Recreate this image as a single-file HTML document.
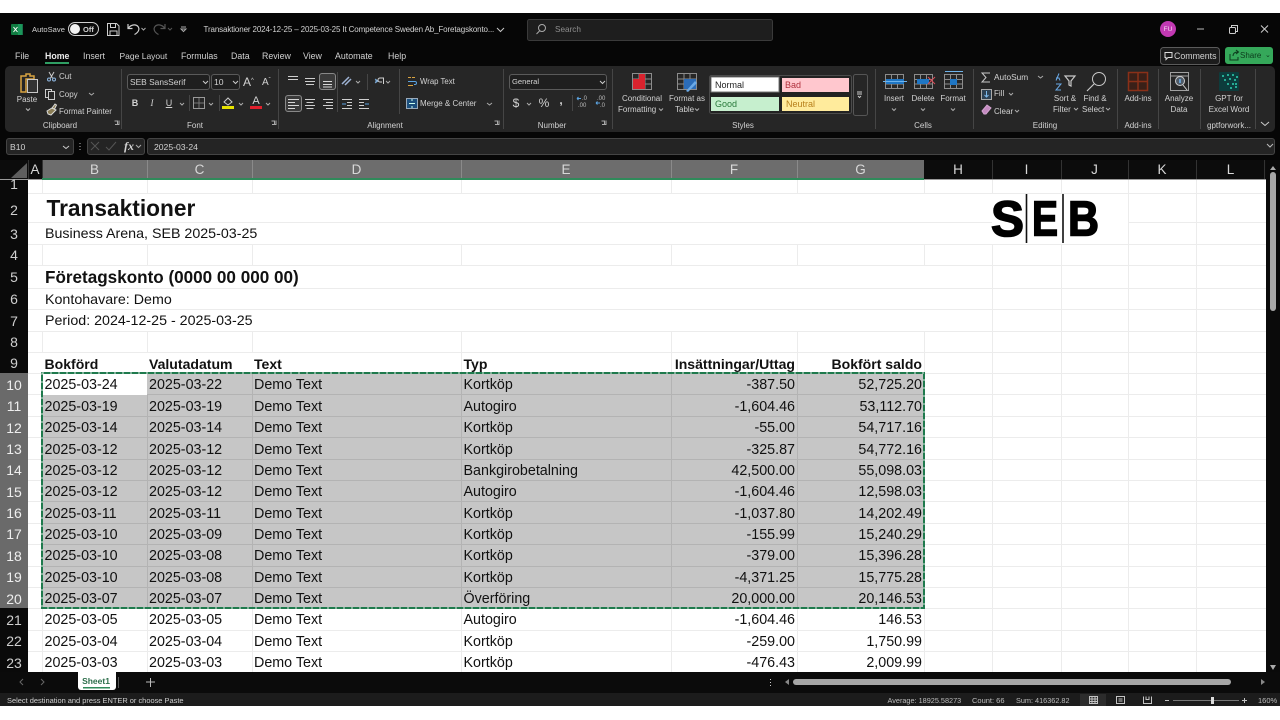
<!DOCTYPE html>
<html><head><meta charset="utf-8"><title>Excel</title>
<style>
html,body{margin:0;padding:0;width:1280px;height:720px;overflow:hidden;background:#fff}
body{position:relative;font-family:"Liberation Sans",sans-serif;filter:blur(.3px)}
svg.bg{position:absolute;left:0;top:0}
.t{position:absolute;white-space:nowrap;color:#d2d2d2;font-size:8px;line-height:12px;height:12px;transform:translateY(-6px)}
.m{transform:translate(-50%,-6px)}
.tab{font-size:8.800px}
.h{position:absolute;color:#d8d8d8;font-size:13.500px;line-height:18px;height:18px;top:161px;text-align:center}
.n{position:absolute;left:0;width:28px;text-align:center;color:#cfcfcf;font-size:14px;line-height:16px;height:16px;transform:translateY(-8px)}
.s{position:absolute;white-space:nowrap;color:#111;font-size:14.250px;line-height:18px;height:18px;transform:translateY(-9px)}
.b{font-weight:bold}
.r{position:absolute;left:0;width:1266px;height:22px;color:#111;font-size:14.300px;line-height:22px}
.r.b{font-size:14.050px}
.r span{position:absolute;white-space:nowrap}
.r .a{left:44.500px}.r .c{left:149px}.r .d{left:254px}.r .e{left:463.500px}
.r .f{right:471px}.r .g{right:344px}
</style></head><body>
<svg class="bg" width="1280" height="720" viewBox="0 0 1280 720" fill="none">
<rect width="1280" height="720" fill="#fff"/>
<rect y="13" width="1280" height="693" fill="#060606"/>
<!-- ribbon -->
<rect x="5" y="66" width="1270" height="66" rx="5" fill="#262626"/>
<g stroke="#454545"><path d="M121.500 69V129M278.500 69V129M399.500 69V114M503.500 69V129M612.500 69V129M875.500 69V129M973.500 69V129M1117.500 69V129M1158.500 69V129M1200.500 69V129M1255.500 69V129M189.500 95V111M219.500 95V111M572.500 95V111M337.500 72V112M367.500 74V90"/></g>
<!-- title bar -->
<rect x="11" y="24" width="11" height="11" rx="1" fill="#107c41"/><path d="M13.500 27l4 5M17.500 27l-4 5" stroke="#fff"/><rect x="18" y="24" width="5" height="11" fill="#21a366" opacity=".7"/>
<rect x="68.500" y="22.500" width="30" height="13" rx="6.500" stroke="#d0d0d0" fill="#0b0b0b"/><circle cx="75" cy="29" r="5" fill="#f2f2f2"/>
<g stroke="#cfcfcf"><path d="M107.500 23.500h9l2.500 2.500v9.500h-11.500zM110.500 23.500v4h5v-4M110 35.500v-4.500h7v4.500"/></g>
<path d="M128 24v4.500h4.500M128.500 28c2-3 7-4.500 9.500-1.500 2 2.500.5 6-3.500 8" stroke="#cfcfcf" stroke-width="1.200"/>
<path d="M141.500 28l2 2 2-2" stroke="#aaa"/><path d="M165 24v4.500h-4.500M164.500 28c-2-3-7-4.500-9.500-1.500-2 2.500-.5 6 3.500 8" stroke="#555" stroke-width="1.200"/><path d="M168 28l2 2 2-2" stroke="#555"/>
<path d="M181 27h5M181 29l2.500 2.500 2.500-2.500z" stroke="#aaa"/>
<path d="M497 28l3.500 3.500 3.500-3.500" stroke="#c8c8c8"/>
<rect x="527.500" y="19.500" width="245" height="21" rx="2" fill="#1e1e1e" stroke="#3a3a3a"/>
<circle cx="542" cy="28" r="3.500" stroke="#aaa"/><path d="M539.500 31l-3 3" stroke="#aaa"/>
<circle cx="1168" cy="29" r="8" fill="#c239b3"/>
<path d="M1197 29h7" stroke="#bbb"/><rect x="1229.500" y="27.500" width="6" height="6" rx="1" stroke="#ccc"/><path d="M1231.500 27v-1.500h6v6h-1.500" stroke="#ccc"/><path d="M1261 25.500l7 7M1268 25.500l-7 7" stroke="#ccc"/>
<rect x="45" y="62" width="24" height="2" fill="#2f9e63"/>
<rect x="1160.500" y="47.500" width="59" height="17" rx="3" fill="#1c1c1c" stroke="#5b5b5b"/>
<path d="M1165 52.500h7v5h-4l-2 2v-2h-1z" stroke="#ddd"/>
<rect x="1225" y="47" width="48" height="17" rx="3" fill="#35a85a"/>
<path d="M1230 54v6h8v-3M1233 56c0-3 2-4 5-4M1236 50l2.500 2-2.500 2" stroke="#0c3a1c"/>
<!-- clipboard -->
<path d="M21 76h5v-2h4v2h4v3h-8v13h-5z" stroke="#d9a441" stroke-width="1.500"/><rect x="27.500" y="79.500" width="10" height="13" stroke="#c8c8c8" fill="#333"/>
<path d="M26 108.500l2 2 2-2" stroke="#bbb"/>
<path d="M49 72l3.500 6M54 72l-3.500 6" stroke="#ccc"/><circle cx="49" cy="79.500" r="1.500" stroke="#8fb7e0"/><circle cx="54" cy="79.500" r="1.500" stroke="#8fb7e0"/>
<rect x="45.500" y="89.500" width="6" height="8" stroke="#ccc"/><rect x="48.500" y="91.500" width="6" height="8" fill="#262626" stroke="#ccc"/>
<path d="M89 93l2.500 2 2.500-2" stroke="#aaa"/>
<path d="M47 111l5-3 4 2-5 5-3-1zM52 108l3-4 1.500 1-2 4" stroke="#ddd" fill="#8a7d55"/>
<path d="M115 124.500h4v-4M114.500 121h3v3" stroke="#aaa"/>
<!-- font -->
<rect x="127.500" y="74.500" width="82" height="15" rx="2.500" fill="#1f1f1f" stroke="#5a5a5a"/><path d="M203 81l2.500 2.500 2.500-2.500" stroke="#ccc"/>
<rect x="211.500" y="74.500" width="28" height="15" rx="2.500" fill="#1f1f1f" stroke="#5a5a5a"/><path d="M233 81l2.500 2.500 2.500-2.500" stroke="#ccc"/>
<path d="M180 103l2 2 2-2M209 103l2 2 2-2M239 103l2 2 2-2M266 103l2 2 2-2" stroke="#aaa"/>
<rect x="193.500" y="97.500" width="11" height="11" stroke="#999"/><path d="M199 98v10M194 103h10" stroke="#777"/>
<path d="M224 102l4-4 4 4-4 3z" stroke="#ccc"/><rect x="222" y="106" width="12" height="3" fill="#e6e200"/>
<rect x="250" y="106" width="12" height="3" fill="#e0202c"/>
<path d="M272 124.500h4v-4M271.500 121h3v3" stroke="#aaa"/>
<!-- alignment -->
<g stroke="#cfcfcf"><path d="M288 76.500h10M288 79.500h10M288 73.500h0"/><path d="M305 78.500h10M305 81.500h10M306 84.500h8"/></g>
<rect x="319.500" y="73.500" width="16" height="16" rx="2.500" fill="#3a3a3a" stroke="#888"/><path d="M323 81.500h9M323 84.500h9M323 87h9" stroke="#d8d8d8"/>
<path d="M342 84l7-7M345 85l6-6" stroke="#9fb4d6" stroke-width="1.500"/><path d="M356 81l2 2 2-2M386 81l2 2 2-2" stroke="#aaa"/>
<path d="M375 81h3M375 83l3-2-3-2" stroke="#7fb1e0"/><path d="M380 78h3.500v6M380 78a2 2 0 0 0 0 4h2" stroke="#d0d0d0"/>
<rect x="285.500" y="95.500" width="16" height="16" rx="2.500" fill="#3a3a3a" stroke="#888"/>
<g stroke="#d8d8d8"><path d="M288 99.500h11M288 102.500h7M288 105.500h11M288 108.500h7"/></g>
<g stroke="#cfcfcf"><path d="M305 99.500h10M306.500 102.500h7M305 105.500h10M306.500 108.500h7M323 99.500h10M326 102.500h7M323 105.500h10M326 108.500h7M342 99.500h10M347 102.500h5M347 105.500h5M342 108.500h10M359 99.500h10M359 102.500h5M359 105.500h5M359 108.500h10"/></g>
<path d="M342 104h4M365 104h4" stroke="#5ba3e0"/>
<path d="M408 77.500h3M412 77.500h3M408 85.500h5" stroke="#d9a441"/><path d="M408 81.500h7a1.500 1.500 0 0 1 0 3h-1" stroke="#5ba3e0"/>
<rect x="406.500" y="98.500" width="11" height="10" fill="#1c4f7d" stroke="#9ab"/><path d="M409 103.500h6M412 99v2M412 106v2" stroke="#cfe"/>
<path d="M487 103l2.500 2 2.500-2" stroke="#aaa"/>
<path d="M495 124.500h4v-4M494.500 121h3v3" stroke="#aaa"/>
<!-- number -->
<rect x="509.500" y="74.500" width="97" height="15" rx="2.500" fill="#1f1f1f" stroke="#5a5a5a"/><path d="M600 81l2.500 2.500 2.500-2.500" stroke="#ccc"/>
<path d="M527 103l2 2 2-2" stroke="#aaa"/>
<path d="M577 98.500h4M577 98.500l1.500-1.500M577 98.500l1.500 1.500M596 103h4M596 103l1.500-1.500M596 103l1.500 1.500" stroke="#5ba3e0" transform="translate(0,0)"/>
<text x="582" y="100" font-family="Liberation Sans" font-size="6" fill="#bbb">.0</text>
<text x="578" y="107" font-family="Liberation Sans" font-size="6" fill="#bbb">.00</text>
<text x="597" y="100" font-family="Liberation Sans" font-size="6" fill="#bbb">.00</text>
<text x="600" y="107" font-family="Liberation Sans" font-size="6" fill="#bbb">.0</text>
<path d="M602 124.500h4v-4M601.500 121h3v3" stroke="#aaa"/>
<!-- cond fmt -->
<g stroke="#8c8c8c"><rect x="632.500" y="73.500" width="19" height="16"/><path d="M639 74v15M645 74v15M633 79h18M633 84h18"/></g>
<path d="M639 74h6v5h-6zM633 79h12v5h-12zM633 84h12v5h-12z" fill="#d9232e"/>
<g stroke="#8c8c8c"><rect x="677.500" y="73.500" width="19" height="16"/><path d="M684 74v15M690 74v15M678 79h18M678 84h18"/></g>
<path d="M684 79h12v10h-12z" fill="#2b6cb8"/><path d="M686 91l9-10 2 2-9 9z" fill="#6aa9e6"/>
<path d="M659 108.500l2 2 2-2M695 108.500l2 2 2-2" stroke="#aaa"/>
<!-- styles -->
<rect x="709.500" y="75.500" width="142" height="38" rx="2" fill="#222" stroke="#4b4b4b"/>
<rect x="711" y="77" width="68" height="15" fill="#fff" stroke="#777"/>
<rect x="782" y="78" width="67" height="14" fill="#ffc7ce"/>
<rect x="711" y="97" width="68" height="14" fill="#c6efce"/>
<rect x="782" y="97" width="67" height="14" fill="#ffeb9c"/>
<rect x="853.500" y="74.500" width="14" height="41" rx="2" fill="#262626" stroke="#555"/><path d="M857 92h5M857 94h5M858 96l1.500 1.500L861 96" stroke="#ccc"/>
<!-- cells -->
<g stroke="#8c8c8c"><rect x="885.500" y="74.500" width="18" height="14"/><path d="M891.500 75v13M897.500 75v13M886 79.500h17M886 84h17"/><rect x="914.500" y="74.500" width="18" height="14"/><path d="M920.500 75v13M926.500 75v13M915 79.500h17M915 84h17"/><rect x="944.500" y="74.500" width="18" height="14"/><path d="M950.500 75v13M956.500 75v13M945 79.500h17M945 84h17"/></g>
<path d="M886 79h18v5h-18z" fill="#1f76c4"/><path d="M883 81.500h24" stroke="#6db3ec"/>
<path d="M917 79h12v5h-12z" fill="#1f76c4"/><path d="M928 77l7 7M935 77l-7 7" stroke="#d84b57"/>
<path d="M950 79h7v6h-7z" fill="#1f76c4"/><path d="M945 71.500h18" stroke="#6db3ec"/>
<path d="M892 108.500l2 2 2-2M921 108.500l2 2 2-2M951 108.500l2 2 2-2" stroke="#aaa"/>
<!-- editing -->
<path d="M990 73h-8l4 4.500-4 4.500h8" stroke="#c8c8c8"/>
<path d="M1038 76l2.500 2 2.500-2M1009 93l2 2 2-2M1015 110l2 2 2-2M1074 108l2 2 2-2M1106 108l2 2 2-2" stroke="#aaa"/>
<rect x="981.500" y="89.500" width="10" height="10" fill="#2e4153" stroke="#aaa"/><path d="M986.500 91v6M984.500 95l2 2 2-2" stroke="#7cb8ea"/>
<path d="M982 111l5-6 4 3-5 6h-2z" fill="#c48ac0" stroke="#d3a4d0"/>
<path d="M1059 73.500l-3 7M1056 78h3l1 2.500M1056 84h5l-5 6h5" stroke="#6aa9e6"/>
<path d="M1065 76h10l-4 5v5l-2-1v-4z" stroke="#c8c8c8" stroke-width="1.200"/>
<circle cx="1099" cy="79" r="6.500" stroke="#c8c8c8"/><path d="M1094 84l-7 7" stroke="#c8c8c8" stroke-width="1.200"/>
<!-- addins -->
<rect x="1128.500" y="72.500" width="19" height="18" fill="#3a2018" stroke="#8a3018" stroke-width="1.500"/><path d="M1138 73v17M1129 81.500h18" stroke="#8a3018" stroke-width="1.500"/>
<rect x="1170.500" y="72.500" width="18" height="18" stroke="#a0a0a0"/><path d="M1171 76h17" stroke="#a0a0a0"/><circle cx="1180" cy="81" r="4.500" stroke="#cfcfcf" fill="#505a66"/><path d="M1180 79v4" stroke="#6db3ec" stroke-width="1.500"/><path d="M1183 85l4 5" stroke="#cfcfcf"/>
<rect x="1219" y="72" width="20" height="19" rx="1" fill="#0d3c3c"/>
<g fill="#2fd0b0"><circle cx="1223" cy="76" r="1"/><circle cx="1228" cy="75" r="1"/><circle cx="1233" cy="75" r="1"/><circle cx="1237" cy="77" r="1"/><circle cx="1225" cy="80" r="1"/><circle cx="1230" cy="79" r="1"/><circle cx="1235" cy="80" r="1"/><circle cx="1228" cy="84" r="1"/><circle cx="1233" cy="84" r="1"/><circle cx="1236" cy="84" r="1"/><circle cx="1231" cy="88" r="1"/><circle cx="1236" cy="87" r="1"/></g>
<path d="M1261 122l4 3.500 4-3.500" stroke="#ccc"/>
<!-- formula bar -->
<rect x="6.500" y="138.500" width="67" height="16" rx="2.500" fill="#242424" stroke="#444"/><path d="M63 146l3 2.500 3-2.500" stroke="#ccc"/>
<path d="M80 143v1M80 146v1M80 149v1" stroke="#bbb"/>
<rect x="87.500" y="138.500" width="57" height="16" rx="2.500" fill="#242424" stroke="#444"/>
<path d="M91 142l8 8M99 142l-8 8M106 147l3 3 7-8" stroke="#555"/><path d="M136 145l2.500 2.500 2.500-2.500" stroke="#aaa"/>
<rect x="147.500" y="138.500" width="1127" height="16" rx="2.500" fill="#242424" stroke="#444"/><path d="M1267 144l3 3 3-3" stroke="#bbb"/>
<!-- headers -->
<rect y="160" width="1280" height="20" fill="#0c0c0c"/>
<rect x="42" y="160" width="882" height="19" fill="#6d6d6d"/>
<path d="M11 178l16-15v15z" fill="#5e5e5e"/>
<g stroke="#8a8a8a"><path d="M147.500 160v19M252.500 160v19M461.500 160v19M671.500 160v19M797.500 160v19"/></g>
<g stroke="#333"><path d="M28.500 160v20M42.500 160v20M992.500 160v20M1061.500 160v20M1128.500 160v20M1196.500 160v20M1264.500 160v20"/></g>
<!-- sheet -->
<rect y="180" width="28" height="492" fill="#0a0a0a"/>
<rect x="28" y="179" width="1238" height="493" fill="#fff"/>
<rect x="0" y="373" width="28" height="235" fill="#6a6a6a"/>
<rect x="0" y="179" width="1266" height="1" fill="#9a9a9a"/>
<rect x="42" y="178" width="882" height="2" fill="#2f8a5a"/>
<rect x="1266" y="160" width="14" height="512" fill="#0a0a0a"/>
<!-- grid horizontals -->
<g stroke="#ececec">
<path d="M28 193.500H1266M28 222.500H992M1128 222.500H1266M28 244.500H1266M28 265.500H1266M28 288.500H1266M28 309.500H1266M28 331.500H1266M28 352.500H1266M28 373.500H1266"/>
<path d="M28 394.500H42M924 394.500H1266M28 416.500H42M924 416.500H1266M28 437.500H42M924 437.500H1266M28 459.500H42M924 459.500H1266M28 480.500H42M924 480.500H1266M28 501.500H42M924 501.500H1266M28 523.500H42M924 523.500H1266M28 544.500H42M924 544.500H1266M28 566.500H42M924 566.500H1266M28 587.500H42M924 587.500H1266"/>
<path d="M28 608.500H1266M28 630.500H1266M28 651.500H1266"/>
<!-- verticals -->
<path d="M42.500 180V193M147.500 180V193M252.500 180V193M461.500 180V193M671.500 180V193M797.500 180V193M924.500 180V193M992.500 180V193M1061.500 180V193M1128.500 180V244M1196.500 180V244"/>
<path d="M42.500 244V265M147.500 244V265M252.500 244V265M461.500 244V265M671.500 244V265M797.500 244V265M924.500 244V265"/>
<path d="M42.500 331V352M147.500 331V352M252.500 331V352M461.500 331V373M671.500 331V373M797.500 331V373M924.500 331V373"/>
<path d="M992.500 244V672M1061.500 244V672M1128.500 244V672M1196.500 244V672"/>
<path d="M42.500 608V672M147.500 608V672M252.500 608V672M461.500 608V672M671.500 608V672M797.500 608V672M924.500 608V672"/>
</g>
<!-- selection -->
<rect x="42" y="373" width="882" height="235" fill="#c6c6c6"/>
<rect x="42" y="373" width="105" height="22" fill="#fff"/>
<g stroke="#b3b3b3"><path d="M147.500 395V608M252.500 373V608M461.500 373V608M671.500 373V608M797.500 373V608"/>
<path d="M42 416.500H924M42 437.500H924M42 459.500H924M42 480.500H924M42 501.500H924M42 523.500H924M42 544.500H924M42 566.500H924M42 587.500H924M147 394.500H924"/></g>
<rect x="42" y="373" width="882" height="235" stroke="#1f7a4d" stroke-width="2"/>
<rect x="42" y="373" width="882" height="235" stroke="#fff" stroke-width="1" stroke-dasharray="2 6" opacity=".85"/>
<!-- SEB logo -->
<text x="991" y="236" font-family="Liberation Sans" font-weight="bold" font-size="50" fill="#000" stroke="#000" stroke-width="1.600" textLength="33" lengthAdjust="spacingAndGlyphs">S</text>
<text x="1032" y="235.500" font-family="Liberation Sans" font-weight="bold" font-size="49" fill="#000" stroke="#000" stroke-width="1.600" textLength="26" lengthAdjust="spacingAndGlyphs">E</text>
<text x="1068" y="235.500" font-family="Liberation Sans" font-weight="bold" font-size="49" fill="#000" stroke="#000" stroke-width="1.600" textLength="31" lengthAdjust="spacingAndGlyphs">B</text>
<path d="M1026.500 194V243M1063 194V243" stroke="#111" stroke-width="1.600"/>
<!-- vertical scroll -->
<path d="M1270 170l3-4 3 4z" fill="#aaa"/><rect x="1270" y="172" width="6" height="139" rx="3" fill="#a8a8a8"/><path d="M1270 665l3 5 3-5z" fill="#aaa"/>
<!-- bottom -->
<rect y="672" width="1280" height="21" fill="#0b0b0b"/>
<path d="M78 672h38v15a3 3 0 0 1-3 3H81a3 3 0 0 1-3-3z" fill="#fff"/>
<rect x="83" y="687" width="27" height="1.500" fill="#2f8a5a"/>
<path d="M23 679l-3 3 3 3M41 679l3 3-3 3" stroke="#666"/><path d="M118.500 677v11" stroke="#555"/>
<path d="M146 682h9M150.500 678v9" stroke="#bbb"/>
<path d="M770.500 679v1M770.500 682v1M770.500 685v1" stroke="#ccc"/>
<path d="M789 679l-4 3 4 3z" fill="#888"/><rect x="793" y="679" width="438" height="6" rx="3" fill="#a6a6a6"/><path d="M1261 679l4 3-4 3z" fill="#888"/>
<rect y="693" width="1280" height="13" fill="#1c1c1c"/><rect y="706" width="1280" height="14" fill="#fff"/>
<rect x="1080" y="694" width="26" height="12" fill="#2c2c2c"/>
<g stroke="#c4c4c4"><rect x="1089.500" y="696.500" width="8" height="7"/><path d="M1092 697v6M1095 697v6M1090 699h7M1090 701.500h7"/><rect x="1116.500" y="696.500" width="8" height="7"/><path d="M1118.500 699h4M1118.500 701h4"/><path d="M1143.500 696.500v7h8v-7M1146 696.500v3h3v-3"/><path d="M1165 700.500h4M1242 700.500h5M1244.500 698v5"/></g>
<path d="M1173 700.500h66" stroke="#777"/><rect x="1211" y="697" width="3" height="7" fill="#ddd"/>
</svg>

<!-- title bar text -->
<span class="t" style="left:32px;top:29.500px;font-size:7.600px">AutoSave</span>
<span class="t" style="left:83px;top:29.500px;font-size:7.500px;font-weight:bold">Off</span>
<span class="t" style="left:203.500px;top:30px;font-size:8px;letter-spacing:-.13px">Transaktioner 2024-12-25 – 2025-03-25 It Competence Sweden Ab_Foretagskonto...</span>
<span class="t" style="left:555px;top:30px;color:#8f8f8f;font-size:8.200px">Search</span>
<span class="t m" style="left:1168px;top:29.500px;font-size:6.500px;color:#f3d9ef">FU</span>
<!-- tabs -->
<span class="t tab" style="left:15px;top:56px">File</span>
<span class="t tab" style="left:45px;top:56px;font-weight:bold;color:#eaeaea">Home</span>
<span class="t tab" style="left:83px;top:56px">Insert</span>
<span class="t tab" style="left:119.500px;top:56px;font-size:8.500px">Page Layout</span>
<span class="t tab" style="left:181px;top:56px">Formulas</span>
<span class="t tab" style="left:231px;top:56px">Data</span>
<span class="t tab" style="left:262px;top:56px">Review</span>
<span class="t tab" style="left:303px;top:56px">View</span>
<span class="t tab" style="left:335px;top:56px">Automate</span>
<span class="t tab" style="left:388px;top:56px">Help</span>
<span class="t tab" style="left:1174px;top:56px">Comments</span>
<span class="t" style="left:1240px;top:56px;color:#0c3a1c">Share</span>
<span class="t" style="left:1265px;top:55.500px;color:#0c3a1c;font-size:7px">⌄</span>
<!-- clipboard -->
<span class="t m" style="left:27px;top:99.500px">Paste</span>
<span class="t" style="left:59px;top:76.500px">Cut</span>
<span class="t" style="left:59px;top:94.500px">Copy</span>
<span class="t" style="left:59px;top:111.500px">Format Painter</span>
<span class="t m" style="left:60px;top:126px">Clipboard</span>
<!-- font -->
<span class="t" style="left:130px;top:82px;font-size:8.400px">SEB SansSerif</span>
<span class="t" style="left:214px;top:82px;font-size:8.600px">10</span>
<span class="t" style="left:243px;top:81px;font-size:12px">A<span style="font-size:6px;vertical-align:4px">^</span></span>
<span class="t" style="left:262px;top:81px;font-size:10px">A<span style="font-size:6px;vertical-align:3px">ˇ</span></span>
<span class="t m" style="left:135px;top:103px;font-weight:bold;font-size:9px">B</span>
<span class="t m" style="left:152px;top:103px;font-style:italic;font-family:'Liberation Serif',serif;font-size:9px">I</span>
<span class="t m" style="left:169px;top:103px;text-decoration:underline;font-size:9px">U</span>
<span class="t m" style="left:256px;top:101px;font-size:11px">A</span>
<span class="t m" style="left:195px;top:126px">Font</span>
<!-- alignment -->
<span class="t" style="left:420px;top:82px;font-size:7.800px">Wrap Text</span>
<span class="t" style="left:420px;top:103.500px">Merge &amp; Center</span>
<span class="t m" style="left:385px;top:126px">Alignment</span>
<!-- number -->
<span class="t" style="left:512px;top:81.500px;font-size:7.600px">General</span>
<span class="t m" style="left:516px;top:103px;font-size:12px">$</span>
<span class="t m" style="left:544px;top:103px;font-size:12px">%</span>
<span class="t m" style="left:561px;top:99.500px;font-size:12px;font-weight:bold">,</span>
<span class="t m" style="left:552px;top:126px">Number</span>
<!-- format -->
<span class="t m" style="left:642px;top:99px">Conditional</span>
<span class="t" style="left:618px;top:109.500px">Formatting</span>
<span class="t m" style="left:687px;top:99px">Format as</span>
<span class="t" style="left:675px;top:109.500px">Table</span>
<span class="t" style="left:715px;top:85px;color:#222;font-size:9px">Normal</span>
<span class="t" style="left:785px;top:85px;color:#b0303c;font-size:9px">Bad</span>
<span class="t" style="left:715px;top:103.500px;color:#2a7a3c;font-size:9px">Good</span>
<span class="t" style="left:786px;top:103.500px;color:#b8801c;font-size:9px">Neutral</span>
<span class="t m" style="left:743px;top:126px">Styles</span>
<!-- cells -->
<span class="t m" style="left:894px;top:99px">Insert</span>
<span class="t m" style="left:923px;top:99px">Delete</span>
<span class="t m" style="left:953px;top:99px">Format</span>
<span class="t m" style="left:923px;top:126px">Cells</span>
<!-- editing -->
<span class="t" style="left:994px;top:77px;font-size:8.300px">AutoSum</span>
<span class="t" style="left:994px;top:94px">Fill</span>
<span class="t" style="left:994px;top:111.500px">Clear</span>
<span class="t m" style="left:1065px;top:99px">Sort &amp;</span>
<span class="t" style="left:1053px;top:109.500px">Filter</span>
<span class="t m" style="left:1095px;top:99px">Find &amp;</span>
<span class="t" style="left:1082px;top:109.500px">Select</span>
<span class="t m" style="left:1045px;top:126px">Editing</span>
<span class="t m" style="left:1138px;top:99px">Add-ins</span>
<span class="t m" style="left:1138px;top:126px">Add-ins</span>
<span class="t m" style="left:1179px;top:99px">Analyze</span>
<span class="t m" style="left:1179px;top:109.500px">Data</span>
<span class="t m" style="left:1229px;top:99px">GPT for</span>
<span class="t m" style="left:1229px;top:109.500px">Excel Word</span>
<span class="t m" style="left:1229px;top:126px">gptforwork...</span>
<!-- formula bar -->
<span class="t" style="left:10px;top:146.500px;font-size:8.600px">B10</span>
<span class="t" style="left:124px;top:146px;font-family:'Liberation Serif',serif;font-style:italic;font-weight:bold;font-size:12px">fx</span>
<span class="t" style="left:154px;top:146.500px;font-size:8.600px">2025-03-24</span>
<!-- col headers -->
<span class="h" style="left:28px;width:14px">A</span>
<span class="h" style="left:42px;width:105px">B</span>
<span class="h" style="left:147px;width:105px">C</span>
<span class="h" style="left:252px;width:209px">D</span>
<span class="h" style="left:461px;width:210px">E</span>
<span class="h" style="left:671px;width:126px">F</span>
<span class="h" style="left:797px;width:127px">G</span>
<span class="h" style="left:924px;width:68px">H</span>
<span class="h" style="left:992px;width:69px">I</span>
<span class="h" style="left:1061px;width:67px">J</span>
<span class="h" style="left:1128px;width:68px">K</span>
<span class="h" style="left:1196px;width:69px">L</span>
<!-- row headers -->
<span class="n" style="top:184px">1</span><span class="n" style="top:210px">2</span><span class="n" style="top:233.500px">3</span><span class="n" style="top:255px">4</span><span class="n" style="top:277px">5</span><span class="n" style="top:299px">6</span><span class="n" style="top:320.500px">7</span><span class="n" style="top:341.500px">8</span><span class="n" style="top:363px">9</span>
<span class="n" style="top:384.500px;color:#eee">10</span><span class="n" style="top:406px;color:#eee">11</span><span class="n" style="top:427.500px;color:#eee">12</span><span class="n" style="top:449px;color:#eee">13</span><span class="n" style="top:470px;color:#eee">14</span><span class="n" style="top:491.500px;color:#eee">15</span><span class="n" style="top:513px;color:#eee">16</span><span class="n" style="top:534px;color:#eee">17</span><span class="n" style="top:555.500px;color:#eee">18</span><span class="n" style="top:577px;color:#eee">19</span><span class="n" style="top:598.500px;color:#eee">20</span>
<span class="n" style="top:619.500px">21</span><span class="n" style="top:641px">22</span><span class="n" style="top:662.500px">23</span>
<!-- sheet headings -->
<span class="s b" style="left:46.500px;top:208px;font-size:22.700px;line-height:28px;height:28px;transform:translateY(-14px)">Transaktioner</span>
<span class="s" style="left:45px;top:234px">Business Arena, SEB 2025-03-25</span>
<span class="s b" style="left:45px;top:277.500px;font-size:17.100px;line-height:22px;height:22px;transform:translateY(-11px)">Företagskonto (0000 00 000 00)</span>
<span class="s" style="left:45px;top:300px">Kontohavare: Demo</span>
<span class="s" style="left:45px;top:321px">Period: 2024-12-25 - 2025-03-25</span>
<div class="r b" style="top:353px"><span class="a">Bokförd</span><span class="c">Valutadatum</span><span class="d">Text</span><span class="e">Typ</span><span class="f">Insättningar/Uttag</span><span class="g">Bokfört saldo</span></div>
<div class="r" style="top:374px"><span class="a">2025-03-24</span><span class="c">2025-03-22</span><span class="d">Demo Text</span><span class="e">Kortköp</span><span class="f">-387.50</span><span class="g">52,725.20</span></div>
<div class="r" style="top:395.500px"><span class="a">2025-03-19</span><span class="c">2025-03-19</span><span class="d">Demo Text</span><span class="e">Autogiro</span><span class="f">-1,604.46</span><span class="g">53,112.70</span></div>
<div class="r" style="top:417px"><span class="a">2025-03-14</span><span class="c">2025-03-14</span><span class="d">Demo Text</span><span class="e">Kortköp</span><span class="f">-55.00</span><span class="g">54,717.16</span></div>
<div class="r" style="top:438.500px"><span class="a">2025-03-12</span><span class="c">2025-03-12</span><span class="d">Demo Text</span><span class="e">Kortköp</span><span class="f">-325.87</span><span class="g">54,772.16</span></div>
<div class="r" style="top:459.500px"><span class="a">2025-03-12</span><span class="c">2025-03-12</span><span class="d">Demo Text</span><span class="e">Bankgirobetalning</span><span class="f">42,500.00</span><span class="g">55,098.03</span></div>
<div class="r" style="top:481px"><span class="a">2025-03-12</span><span class="c">2025-03-12</span><span class="d">Demo Text</span><span class="e">Autogiro</span><span class="f">-1,604.46</span><span class="g">12,598.03</span></div>
<div class="r" style="top:502.500px"><span class="a">2025-03-11</span><span class="c">2025-03-11</span><span class="d">Demo Text</span><span class="e">Kortköp</span><span class="f">-1,037.80</span><span class="g">14,202.49</span></div>
<div class="r" style="top:523.500px"><span class="a">2025-03-10</span><span class="c">2025-03-09</span><span class="d">Demo Text</span><span class="e">Kortköp</span><span class="f">-155.99</span><span class="g">15,240.29</span></div>
<div class="r" style="top:545px"><span class="a">2025-03-10</span><span class="c">2025-03-08</span><span class="d">Demo Text</span><span class="e">Kortköp</span><span class="f">-379.00</span><span class="g">15,396.28</span></div>
<div class="r" style="top:566.500px"><span class="a">2025-03-10</span><span class="c">2025-03-08</span><span class="d">Demo Text</span><span class="e">Kortköp</span><span class="f">-4,371.25</span><span class="g">15,775.28</span></div>
<div class="r" style="top:588px"><span class="a">2025-03-07</span><span class="c">2025-03-07</span><span class="d">Demo Text</span><span class="e">Överföring</span><span class="f">20,000.00</span><span class="g">20,146.53</span></div>
<div class="r" style="top:609px"><span class="a">2025-03-05</span><span class="c">2025-03-05</span><span class="d">Demo Text</span><span class="e">Autogiro</span><span class="f">-1,604.46</span><span class="g">146.53</span></div>
<div class="r" style="top:630.500px"><span class="a">2025-03-04</span><span class="c">2025-03-04</span><span class="d">Demo Text</span><span class="e">Kortköp</span><span class="f">-259.00</span><span class="g">1,750.99</span></div>
<div class="r" style="top:651.500px;height:20px;overflow:visible"><span class="a">2025-03-03</span><span class="c">2025-03-03</span><span class="d">Demo Text</span><span class="e">Kortköp</span><span class="f">-476.43</span><span class="g">2,009.99</span></div>
<!-- bottom text -->
<span class="t m" style="left:96px;top:680.500px;color:#2d6e4b;font-weight:bold;font-size:8.500px">Sheet1</span>
<span class="t" style="left:7px;top:701px;font-size:7.450px;color:#cfcfcf">Select destination and press ENTER or choose Paste</span>
<span class="t" style="left:887.500px;top:700.500px;font-size:7.300px;color:#bdbdbd">Average: 18925.58273</span>
<span class="t" style="left:972px;top:700.500px;font-size:7.500px;color:#bdbdbd">Count: 66</span>
<span class="t" style="left:1016px;top:700.500px;font-size:7.300px;color:#bdbdbd">Sum: 416362.82</span>
<span class="t" style="left:1258px;top:700.500px;font-size:7.500px;color:#bdbdbd">160%</span>
</body></html>
